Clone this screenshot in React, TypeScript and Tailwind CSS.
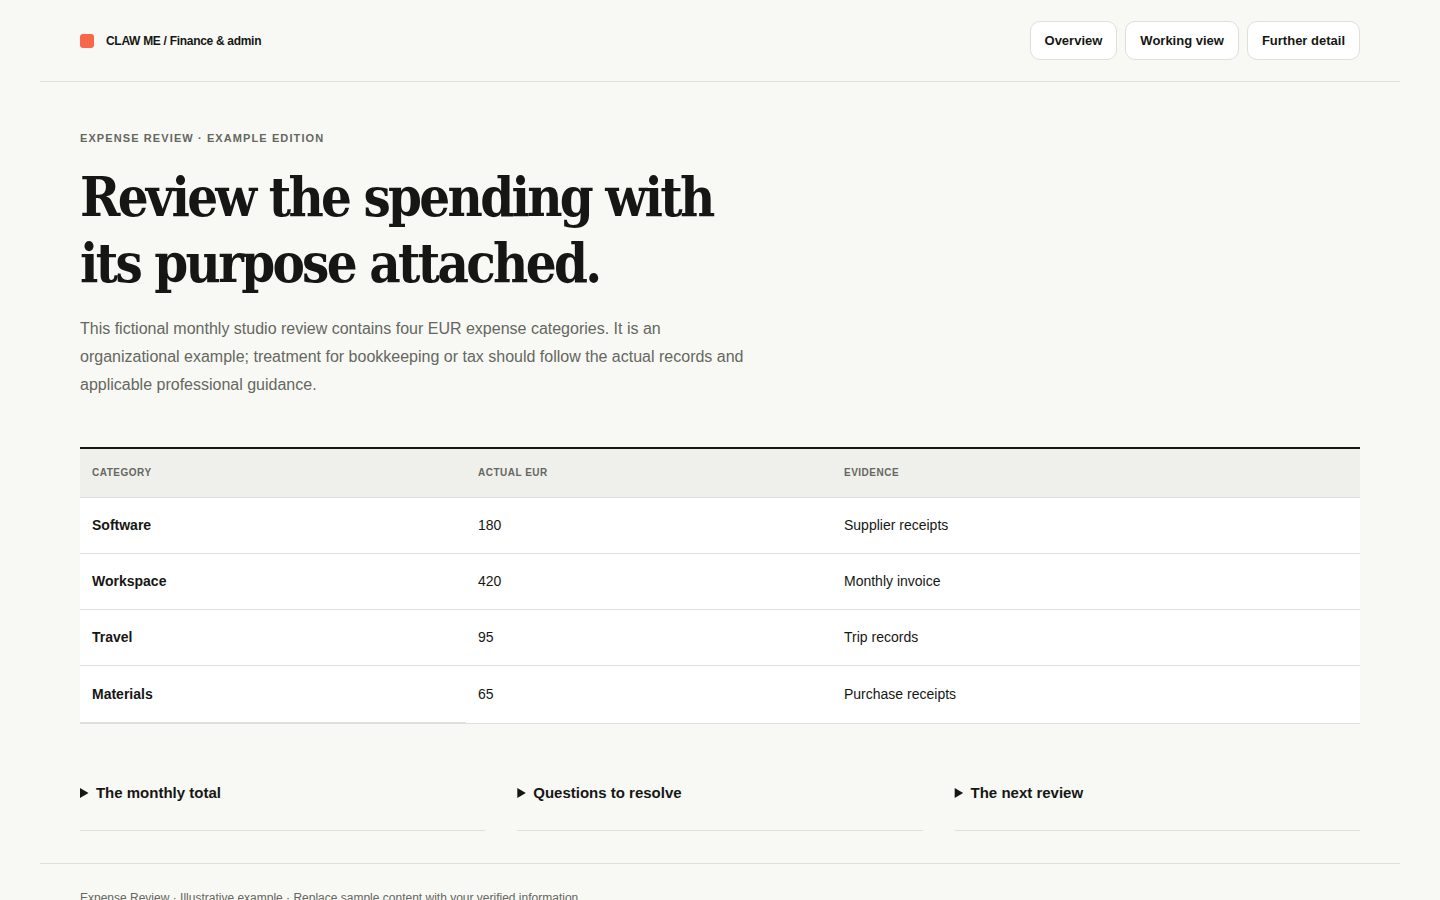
const NAV_LINKS = [
  { label: 'Overview', href: '#overview' },
  { label: 'Working view', href: '#working-view' },
  { label: 'Further detail', href: '#further-detail' },
];

const EXPENSES = [
  { category: 'Software', actual: 180, evidence: 'Supplier receipts' },
  { category: 'Workspace', actual: 420, evidence: 'Monthly invoice' },
  { category: 'Travel', actual: 95, evidence: 'Trip records' },
  { category: 'Materials', actual: 65, evidence: 'Purchase receipts' },
];

const NOTES = ['The monthly total', 'Questions to resolve', 'The next review'];

function Header() {
  return (
    <header className="flex items-center justify-between border-b border-[#dfe0db] px-10 py-[21px]">
      <div className="flex items-center gap-3 text-xs font-bold tracking-tight">
        <span className="size-3.5 rounded-[3px] bg-[#f7684b]" />
        CLAW ME / Finance &amp; admin
      </div>
      <nav className="flex gap-2">
        {NAV_LINKS.map(({ label, href }) => (
          <a
            key={href}
            href={href}
            className="rounded-[10px] border border-[#dfe0db] bg-white px-3.5 py-2 text-[13px] leading-[21px] font-bold"
          >
            {label}
          </a>
        ))}
      </nav>
    </header>
  );
}

function Intro() {
  return (
    <section id="overview">
      <p className="text-[11px] leading-4 font-bold tracking-widest text-[#656761] uppercase">
        Expense review · Example edition
      </p>
      <h1 className="mt-[18px] max-w-[700px] font-['DejaVu_Serif_Condensed','DejaVu_Serif',serif] text-[54px] leading-[66px] font-bold tracking-tighter">
        Review the spending with its purpose attached.
      </h1>
      <p className="mt-[19px] max-w-[680px] text-base leading-7 text-[#656761]">
        This fictional monthly studio review contains four EUR expense categories. It is an
        organizational example; treatment for bookkeeping or tax should follow the actual records and
        applicable professional guidance.
      </p>
    </section>
  );
}

function ExpenseTable() {
  return (
    <table
      id="working-view"
      className="mt-12 w-full border-collapse border-t-2 border-[#161714] bg-white text-left text-sm"
    >
      <thead>
        <tr className="h-[49px] border-b border-[#dfe0db] bg-[#eff0eb] text-[10px] tracking-wider text-[#656761] uppercase">
          <th scope="col" className="w-[386px] px-3 font-bold">
            Category
          </th>
          <th scope="col" className="w-[366px] px-3 font-bold">
            Actual EUR
          </th>
          <th scope="col" className="px-3 font-bold">
            Evidence
          </th>
        </tr>
      </thead>
      <tbody className="[&>tr:last-child]:h-[58px] [&>tr:last-child>th]:border-b-2">
        {EXPENSES.map(({ category, actual, evidence }) => (
          <tr key={category} className="h-14 border-b border-[#dfe0db]">
            <th scope="row" className="border-[#dfe0db] px-3 font-bold">
              {category}
            </th>
            <td className="px-3">{actual}</td>
            <td className="px-3">{evidence}</td>
          </tr>
        ))}
      </tbody>
    </table>
  );
}

export default function App() {
  return (
    <div className="min-h-screen bg-[#f8f9f4] px-10 font-['Liberation_Sans',Arial,sans-serif] text-[#161714]">
      <Header />
      <main className="px-10 pt-12 pb-8">
        <Intro />
        <ExpenseTable />
        <section id="further-detail" className="mt-12 grid grid-cols-3 gap-8">
          {NOTES.map((title) => (
            <details key={title} className="border-b border-[#dfe0db] pb-4">
              <summary className="cursor-pointer py-2 text-[15px] leading-[26px] font-bold">
                {title}
              </summary>
            </details>
          ))}
        </section>
      </main>
      <footer className="border-t border-[#dfe0db] px-10 py-6 text-xs leading-5 text-[#656761]">
        Expense Review · Illustrative example · Replace sample content with your verified information.
      </footer>
    </div>
  );
}
